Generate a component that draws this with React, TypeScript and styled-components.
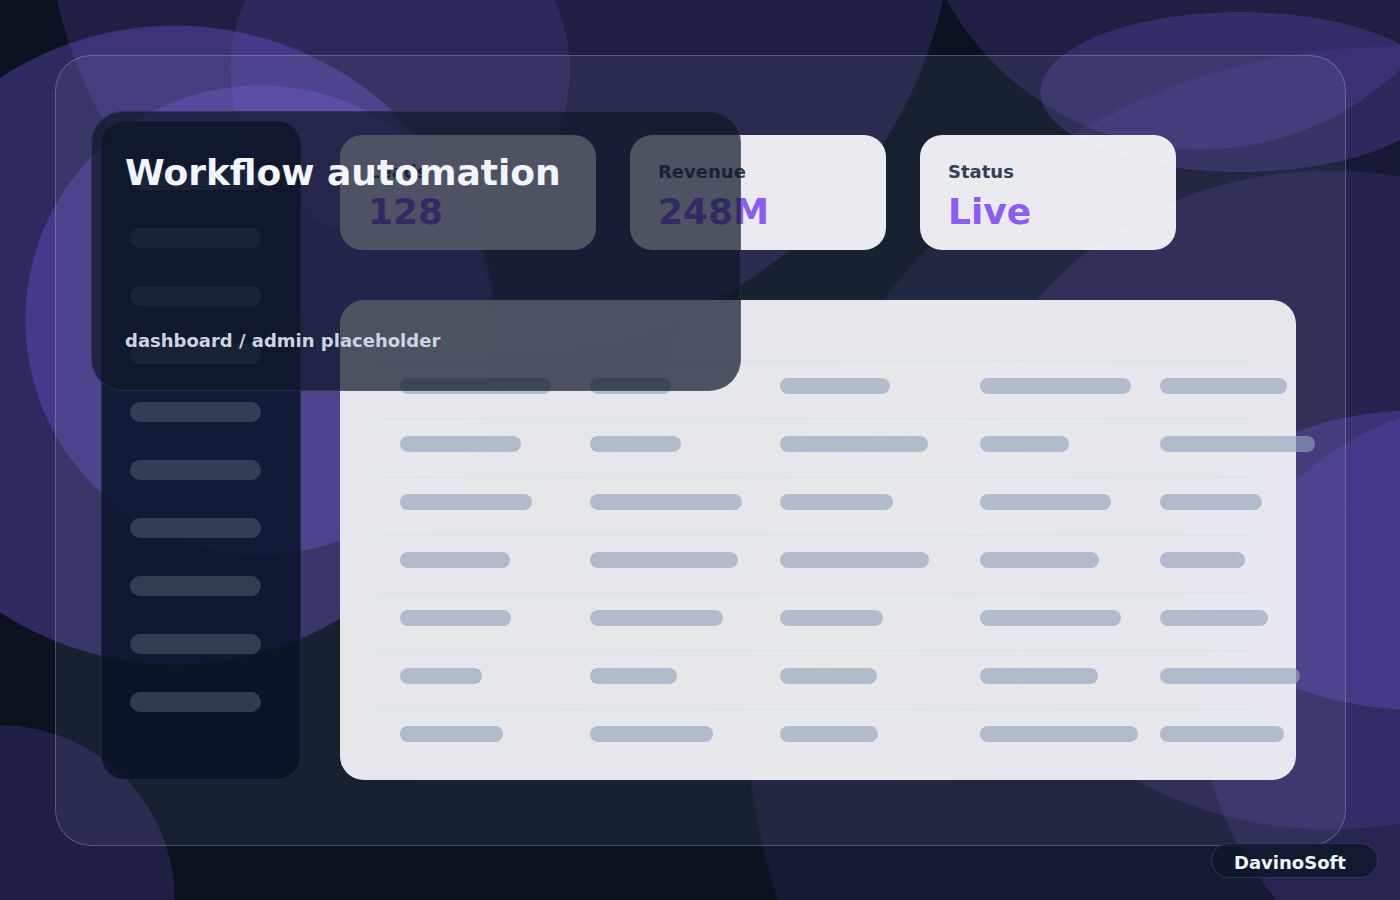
import { FC } from "react";
import styled, { createGlobalStyle } from "styled-components";

// background blobs (hard edged circles, later ones sit underneath)
type Blob = { x: number; y: number; rx: number; ry?: number; a: number };

const blobs: Blob[] = [
  { x: 260, y: 320, rx: 235, a: 0.3 },
  { x: 400, y: 70, rx: 170, a: 0.14 },
  { x: 175, y: 345, rx: 320, a: 0.32 },
  { x: 1240, y: 92, rx: 200, ry: 80, a: 0.22 },
  { x: 1420, y: 560, rx: 240, ry: 150, a: 0.26 },
  { x: 1500, y: 700, rx: 300, a: 0.16 },
  { x: 0, y: 900, rx: 175, a: 0.18 },
  { x: 500, y: -100, rx: 455, a: 0.18 },
  { x: 1200, y: -140, rx: 290, a: 0.18 },
  { x: 1330, y: 500, rx: 370, ry: 330, a: 0.15 },
  { x: 1400, y: 700, rx: 655, a: 0.1 },
];

const blobLayer = blobs
  .map((b) => {
    const shape = b.ry ? `ellipse ${b.rx}px ${b.ry}px` : `circle ${b.rx}px`;
    return `radial-gradient(${shape} at ${b.x}px ${b.y}px, rgba(124,92,230,${b.a}) 99.6%, transparent 100%)`;
  })
  .join(", ");

// table placeholder widths
const rows: number[][] = [
  [151, 81, 110, 151, 127],
  [121, 91, 148, 89, 155],
  [132, 152, 113, 131, 102],
  [110, 148, 149, 119, 85],
  [111, 133, 103, 141, 108],
  [82, 87, 97, 118, 140],
  [103, 123, 98, 158, 124],
];

const stats = [
  { label: "Leads", value: "128" },
  { label: "Revenue", value: "248M" },
  { label: "Status", value: "Live" },
];

const GlobalStyle = createGlobalStyle`
  * { box-sizing: border-box; }
  html, body { margin: 0; padding: 0; }
  body {
    font-family: "DejaVu Sans", "Liberation Sans", sans-serif;
    background: #0a1220;
  }
`;

// css
const Page = styled.div`
  position: relative;
  width: 1400px;
  height: 900px;
  overflow: hidden;
  padding: 55px;
  background: ${blobLayer}, #0a1220;
`;

const Frame = styled.div`
  position: relative;
  display: flex;
  gap: 39px;
  width: 1291px;
  height: 791px;
  padding: 65px 49px 65px 45px;
  border: 1px solid rgba(203, 213, 225, 0.28);
  border-radius: 36px;
  background: rgba(148, 163, 184, 0.1);
`;

const Sidebar = styled.aside`
  display: flex;
  flex-direction: column;
  gap: 38px;
  width: 200px;
  flex-shrink: 0;
  padding: 48px 28px;
  border: 1px solid rgba(148, 163, 184, 0.14);
  border-radius: 24px;
  background: rgba(8, 18, 38, 0.84);
`;

const NavBar = styled.div`
  width: 131px;
  height: 20px;
  border-radius: 10px;
  background: rgba(71, 85, 105, 0.62);
`;

const Main = styled.main`
  display: flex;
  flex-direction: column;
  gap: 50px;
  width: 956px;
  padding-top: 14px;
`;

const StatsRow = styled.div`
  display: flex;
  gap: 34px;
`;

const StatCard = styled.div`
  display: flex;
  flex-direction: column;
  gap: 9px;
  width: 256px;
  height: 115px;
  padding: 26px 28px 0;
  border-radius: 22px;
  background: rgba(243, 244, 247, 0.96);
`;

const StatLabel = styled.span`
  font-size: 18px;
  font-weight: 700;
  line-height: 21px;
  color: #334155;
`;

const StatValue = styled.span`
  font-size: 36px;
  font-weight: 700;
  line-height: 42px;
  color: #8b5cf6;
`;

const TableCard = styled.section`
  height: 480px;
  padding: 60px 45px 0 40px;
  border-radius: 24px;
  background: linear-gradient(
    110deg,
    rgba(235, 237, 240, 0.97) 0%,
    rgba(236, 238, 241, 0.97) 55%,
    rgba(240, 240, 245, 0.95) 100%
  );
`;

const Row = styled.div`
  display: grid;
  grid-template-columns: 190px 190px 200px 180px 1fr;
  height: 58px;
  padding: 16px 0 0 20px;
  border-top: 2px solid #dce4ee;
`;

const Cell = styled.div`
  height: 16px;
  border-radius: 8px;
  background: rgba(148, 163, 184, 0.64);
`;

const Overlay = styled.div`
  position: absolute;
  left: 35px;
  top: 55px;
  display: flex;
  flex-direction: column;
  justify-content: space-between;
  width: 650px;
  height: 280px;
  padding: 39px 34px 38px 33px;
  border: 1px solid rgba(148, 163, 184, 0.14);
  border-radius: 32px;
  background: rgba(15, 23, 42, 0.72);
`;

const Title = styled.h1`
  margin: 0;
  font-size: 36px;
  font-weight: 700;
  line-height: 1.2;
  color: #f1f5fd;
`;

const Subtitle = styled.p`
  margin: 0;
  font-size: 18px;
  font-weight: 700;
  line-height: 1.2;
  color: #cbd5e1;
`;

const Badge = styled.div`
  position: absolute;
  right: 22px;
  bottom: 22px;
  display: flex;
  align-items: center;
  width: 167px;
  height: 35px;
  padding: 4px 22px 0;
  border: 1px solid rgba(148, 163, 184, 0.2);
  border-radius: 18px;
  background: rgba(15, 23, 42, 0.82);
  font-size: 18px;
  font-weight: 700;
  color: #f1f5f9;
`;

const App: FC = () => {
  return (
    <Page>
      <GlobalStyle />
      <Frame>
        <Sidebar>
          {Array.from({ length: 10 }).map((_, i) => (
            <NavBar key={`nav-${i}`} />
          ))}
        </Sidebar>
        <Main>
          <StatsRow>
            {stats.map((s) => (
              <StatCard key={s.label}>
                <StatLabel>{s.label}</StatLabel>
                <StatValue>{s.value}</StatValue>
              </StatCard>
            ))}
          </StatsRow>
          <TableCard>
            {rows.map((row, r) => (
              <Row key={`row-${r}`}>
                {row.map((w, c) => (
                  <Cell key={`cell-${r}-${c}`} style={{ width: w }} />
                ))}
              </Row>
            ))}
          </TableCard>
        </Main>
        <Overlay>
          <Title>Workflow automation</Title>
          <Subtitle>dashboard / admin placeholder</Subtitle>
        </Overlay>
      </Frame>
      <Badge>DavinoSoft</Badge>
    </Page>
  );
};

export default App;
